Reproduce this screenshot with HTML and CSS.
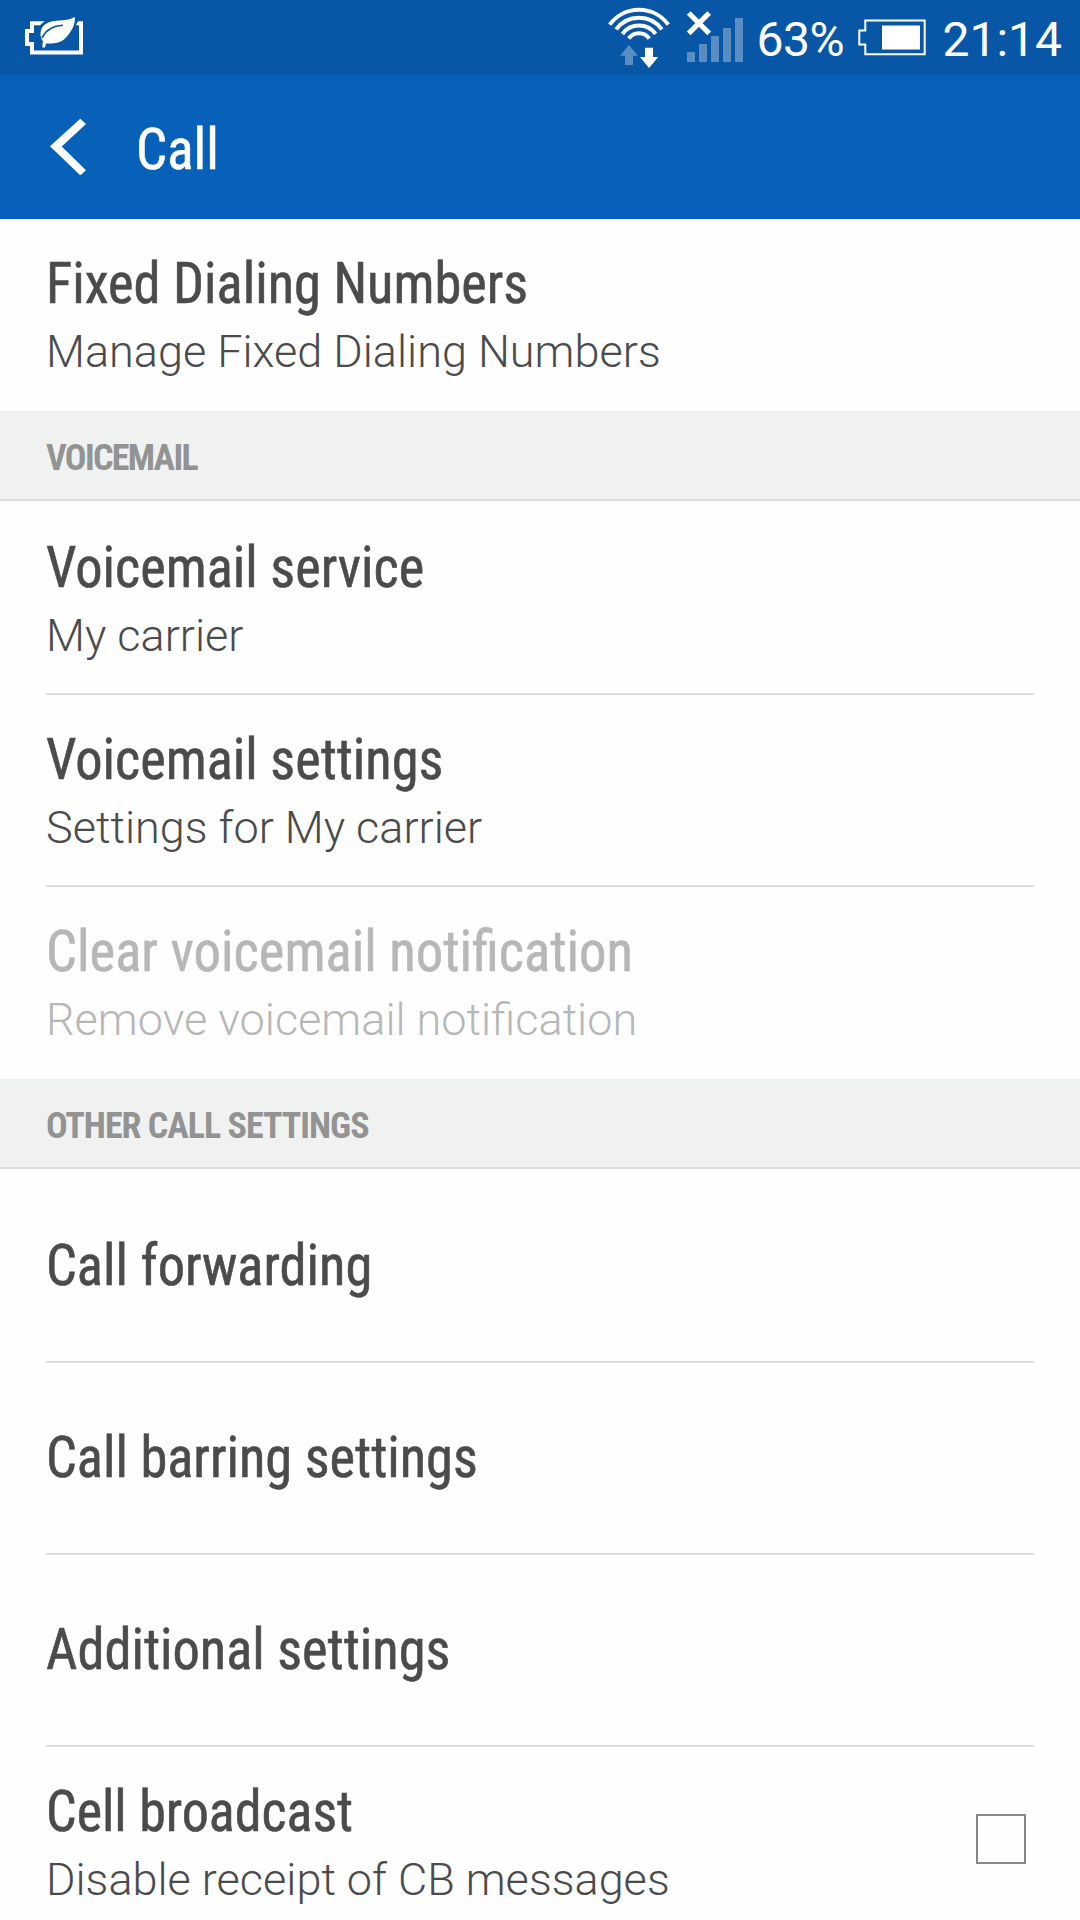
FILE: index.html
```
<!DOCTYPE html>
<html lang="en">
<head>
<meta charset="utf-8">
<title>Call</title>
<link rel="stylesheet" href="styles.css">
</head>
<body>
<div class="status-bar">
  <svg class="power-saver" width="60" height="40" viewBox="24 16 60 40">
    <path class="frame" d="M44.5 21.3H30V29H25V46H30V54.6H83V21.3H78L76 25.3H79V50.6H34V42H29V33H34V25.3H40Z"/>
    <path class="frame" d="M74.7 17C76 24 71 33 64 39.5C58 44 50 43.5 46 43.5L45 47.6H42.3C42.6 45.5 42.3 44 43 41.5C39 36 40 28 45 24.5C52 18.5 65 22.5 74.7 17Z"/>
    <path class="vein" d="M63 25.3C53 25.8 45.5 30.5 42 38"/>
  </svg>
  <div class="status-icons">
    <svg class="wifi" width="54" height="64" viewBox="606 6 54 64" overflow="visible">
      <g class="wifi-arcs">
        <path d="M609.7 24.7A36.2 36.2 0 0 1 668.3 24.7"/>
        <path d="M616.1 29.4A28.3 28.3 0 0 1 661.9 29.4"/>
        <path d="M622.4 34A20.5 20.5 0 0 1 655.6 34"/>
        <path d="M628.7 38.5A12.7 12.7 0 0 1 649.3 38.5"/>
      </g>
      <path class="dim" d="M629 45L638 55.7H633V65H625V55.7H620Z"/>
      <path class="frame" d="M645 47.7H653V57H658.3L649 68L640 57H645Z"/>
    </svg>
    <svg class="signal" width="58" height="54" viewBox="686 10 58 54">
      <path class="cross" d="M688.7 13L709.2 33.4M709.2 13L688.7 33.4"/>
      <path class="dim" d="M687 52h8v10h-8ZM699 44h8v18h-8ZM711 36h8v26h-8ZM723 28h8v34h-8ZM735 18h8v44h-8Z"/>
    </svg>
    <span class="status-text percent">63%</span>
    <svg class="battery" width="70" height="38" viewBox="857 18 70 38">
      <path class="battery-frame" d="M865.3 20.5H924.7V54.3H865.3V44.5H859.3V30.5H865.3Z"/>
      <path class="frame" d="M882 25.5h38v24h-38Z"/>
    </svg>
    <span class="status-text">21:14</span>
  </div>
</div>
<header class="app-bar">
  <svg class="back" width="36" height="57" viewBox="50 118 36 57">
    <path class="frame" d="M50 146.3L80.3 118.7L86 124L61.7 146.6L86 170.2L80.3 175.3Z"/>
  </svg>
  <h1 class="title heading">Call</h1>
</header>
<main>
  <section class="group">
    <div class="row"><div class="title">Fixed Dialing Numbers</div><div class="summary">Manage Fixed Dialing Numbers</div></div>
  </section>
  <h2 class="section-label voicemail">VOICEMAIL</h2>
  <section class="group">
    <div class="row"><div class="title">Voicemail service</div><div class="summary">My carrier</div></div>
    <div class="row"><div class="title">Voicemail settings</div><div class="summary">Settings for My carrier</div></div>
    <div class="row disabled"><div class="title clear">Clear voicemail notification</div><div class="summary">Remove voicemail notification</div></div>
  </section>
  <h2 class="section-label">OTHER CALL SETTINGS</h2>
  <section class="group">
    <div class="row single"><div class="title">Call forwarding</div></div>
    <div class="row single"><div class="title">Call barring settings</div></div>
    <div class="row single"><div class="title">Additional settings</div></div>
    <div class="row with-check">
      <div><div class="title cell">Cell broadcast</div><div class="summary">Disable receipt of CB messages</div></div>
      <span class="checkbox" role="checkbox" aria-checked="false"></span>
    </div>
  </section>
</main>
</body>
</html>
```
FILE: styles.css
```
* { box-sizing: border-box; }
html, body { height: 1920px; overflow: hidden; }
body { margin: 0; background: #fefefe; color: #4b4b4b; font-family: Roboto, sans-serif; }
svg { display: block; flex: none; }

.status-bar { display: flex; justify-content: space-between; align-items: flex-start; height: 75px; padding: 0 18px 0 24px; background: #0757a6; color: #fff; }
.power-saver { margin-top: 16px; }
.status-icons { display: flex; align-items: flex-start; }
.status-text { margin-top: 11px; font-size: 48px; line-height: 58px; }
.percent { width: 101px; margin-left: 12px; letter-spacing: -0.4px; }
.wifi { margin-top: 6px; }
.signal { margin: 10px 0 0 26px; }
.battery { margin: 18px 15px 0 0; }

.frame { fill: #fff; }
.dim { fill: #5a8ec3; }
.vein { fill: none; stroke: #0757a6; stroke-width: 1.6; }
.wifi-arcs { fill: none; stroke: #fff; stroke-width: 3.9; }
.cross { fill: none; stroke: #fff; stroke-width: 5.2; }
.battery-frame { fill: none; stroke: #fff; stroke-width: 2; }

.app-bar { display: flex; align-items: flex-start; gap: 50px; height: 144px; padding: 41px 50px 0; background: #0761b9; color: #fff; }
.back { margin-top: 2px; }

/* Titles are set slightly narrower than the condensed face's own width. */
.title { margin: 0; font: 400 57px/68px "Roboto Condensed", Roboto, sans-serif; white-space: nowrap; transform: scaleX(0.955); transform-origin: 0 0; -webkit-text-stroke: 0.6px currentColor; }
.heading { transform: scaleX(0.965); }
.clear { transform: scaleX(0.959); }
.cell { transform: scaleX(0.948); }
.summary { margin-top: 7px; font-size: 45px; font-weight: 300; line-height: 54px; white-space: nowrap; }

.group { padding: 0 46px; }
.row { height: 192px; padding-top: 31px; border-bottom: 2px solid #dcdcdc; }
.row:last-child { border-bottom: 0; }
.row.single { padding-top: 61px; }
.disabled { color: #b7b7b7; }

.section-label { height: 92px; margin: 0; padding: 26px 46px 0; border-bottom: 2px solid #fefefe; background: #f0f2f1; box-shadow: inset 0 -2px #dcdcdc; color: #939393; font: 700 36px/42px "Roboto Condensed", Roboto, sans-serif; letter-spacing: -1px; }
.voicemail { letter-spacing: -1.7px; }

.with-check { display: flex; justify-content: space-between; }
.checkbox { width: 50px; height: 50px; margin: 36px 8px 0 0; border: 2px solid #888; }
```
